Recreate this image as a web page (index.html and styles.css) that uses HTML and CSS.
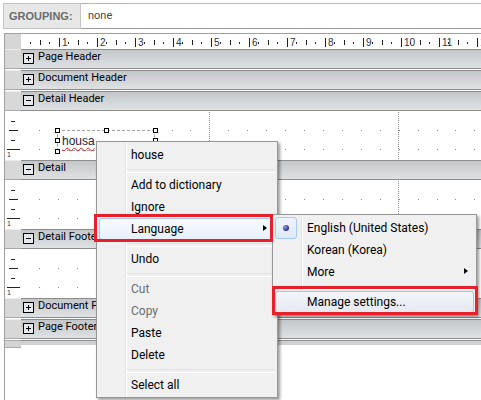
FILE: index.html
```html
<!DOCTYPE html>
<html>
<head>
<meta charset="utf-8">
<link rel="stylesheet" href="styles.css">
</head>
<body>
<div class="toolbar">
  <div class="tb-label">GROUPING:</div>
  <div class="tb-field">none</div>
</div>

<div class="designer">
  <div class="ruler-row">
    <div class="side side-gray"></div>
    <svg class="hruler" width="460" height="15" shape-rendering="crispEdges">
      <defs>
        <pattern id="ticks" width="38" height="15" patternUnits="userSpaceOnUse">
          <line x1="0.5" y1="4" x2="0.5" y2="13" stroke="#222"/>
          <line x1="9.5" y1="8" x2="9.5" y2="10" stroke="#222"/>
          <line x1="19.5" y1="6" x2="19.5" y2="11" stroke="#222"/>
          <line x1="28.5" y1="8" x2="28.5" y2="10" stroke="#222"/>
        </pattern>
      </defs>
      <rect x="1" y="0" width="459" height="15" fill="url(#ticks)"/>
      <g class="rnum">
        <text x="41" y="12">1</text><text x="79" y="12">2</text><text x="117" y="12">3</text>
        <text x="155" y="12">4</text><text x="193" y="12">5</text><text x="231" y="12">6</text>
        <text x="269" y="12">7</text><text x="307" y="12">8</text><text x="345" y="12">9</text>
        <text x="383" y="12">10</text><text x="421" y="12">11</text><text x="459" y="12">12</text>
      </g>
    </svg>
  </div>

  <div class="band"><div class="side side-band"></div><div class="band-bar"><span class="toggle plus"></span>Page Header</div></div>
  <div class="band"><div class="side side-band"></div><div class="band-bar"><span class="toggle plus"></span>Document Header</div></div>
  <div class="band"><div class="side side-band"></div><div class="band-bar"><span class="toggle"></span>Detail Header</div></div>
  <div class="body-row">
    <svg class="vruler" width="16" height="49" shape-rendering="crispEdges">
      <line x1="6" y1="10.5" x2="10" y2="10.5" stroke="#222"/>
      <line x1="4" y1="19.5" x2="13" y2="19.5" stroke="#222"/>
      <line x1="6" y1="29.5" x2="10" y2="29.5" stroke="#222"/>
      <line x1="2" y1="38.5" x2="15" y2="38.5" stroke="#222"/>
      <text x="2" y="46" class="vnum">1</text>
    </svg>
    <div class="canvas">
      <svg class="grid" width="460" height="49" shape-rendering="crispEdges">
        <line x1="18" y1="19.5" x2="460" y2="19.5" stroke="#8c8c8c" stroke-dasharray="1 17.93"/>
        <line x1="18" y1="38.5" x2="460" y2="38.5" stroke="#8c8c8c" stroke-dasharray="1 17.93"/>
        <line x1="188.5" y1="1" x2="188.5" y2="49" stroke="#8a8a8a" stroke-dasharray="1 1"/>
        <line x1="377.5" y1="1" x2="377.5" y2="49" stroke="#8a8a8a" stroke-dasharray="1 1"/>
      </svg>
      <div class="textbox">
        <span class="tb-text">housa</span>
        <i class="h h1"></i><i class="h h2"></i><i class="h h3"></i>
        <i class="h h4"></i><i class="h h5"></i>
        <i class="h h6"></i><i class="h h7"></i><i class="h h8"></i>
      </div>
    </div>
  </div>

  <div class="band"><div class="side side-band"></div><div class="band-bar"><span class="toggle"></span>Detail</div></div>
  <div class="body-row">
    <svg class="vruler" width="16" height="49" shape-rendering="crispEdges">
      <line x1="6" y1="10.5" x2="10" y2="10.5" stroke="#222"/>
      <line x1="4" y1="19.5" x2="13" y2="19.5" stroke="#222"/>
      <line x1="6" y1="29.5" x2="10" y2="29.5" stroke="#222"/>
      <line x1="2" y1="38.5" x2="15" y2="38.5" stroke="#222"/>
      <text x="2" y="46" class="vnum">1</text>
    </svg>
    <div class="canvas">
      <svg class="grid" width="460" height="49" shape-rendering="crispEdges">
        <line x1="18" y1="19.5" x2="460" y2="19.5" stroke="#8c8c8c" stroke-dasharray="1 17.93"/>
        <line x1="18" y1="38.5" x2="460" y2="38.5" stroke="#8c8c8c" stroke-dasharray="1 17.93"/>
        <line x1="188.5" y1="1" x2="188.5" y2="49" stroke="#8a8a8a" stroke-dasharray="1 1"/>
        <line x1="377.5" y1="1" x2="377.5" y2="49" stroke="#8a8a8a" stroke-dasharray="1 1"/>
      </svg>
    </div>
  </div>

  <div class="band"><div class="side side-band"></div><div class="band-bar"><span class="toggle"></span>Detail Footer</div></div>
  <div class="body-row">
    <svg class="vruler" width="16" height="49" shape-rendering="crispEdges">
      <line x1="6" y1="10.5" x2="10" y2="10.5" stroke="#222"/>
      <line x1="4" y1="19.5" x2="13" y2="19.5" stroke="#222"/>
      <line x1="6" y1="29.5" x2="10" y2="29.5" stroke="#222"/>
      <line x1="2" y1="38.5" x2="15" y2="38.5" stroke="#222"/>
      <text x="2" y="46" class="vnum">1</text>
    </svg>
    <div class="canvas">
      <svg class="grid" width="460" height="49" shape-rendering="crispEdges">
        <line x1="18" y1="19.5" x2="460" y2="19.5" stroke="#8c8c8c" stroke-dasharray="1 17.93"/>
        <line x1="18" y1="38.5" x2="460" y2="38.5" stroke="#8c8c8c" stroke-dasharray="1 17.93"/>
        <line x1="188.5" y1="1" x2="188.5" y2="49" stroke="#8a8a8a" stroke-dasharray="1 1"/>
        <line x1="377.5" y1="1" x2="377.5" y2="49" stroke="#8a8a8a" stroke-dasharray="1 1"/>
      </svg>
    </div>
  </div>

  <div class="band"><div class="side side-band"></div><div class="band-bar"><span class="toggle plus"></span>Document Footer</div></div>
  <div class="band"><div class="side side-band"></div><div class="band-bar"><span class="toggle plus"></span>Page Footer</div></div>
  <div class="strip"><div class="side side-strip"></div><div class="strip-bar"></div></div>
</div>

<div class="menu main-menu">
  <div class="mi">house</div>
  <div class="sep"></div>
  <div class="mi">Add to dictionary</div>
  <div class="mi">Ignore</div>
  <div class="mi hot">Language<span class="arrow"></span></div>
  <div class="sep"></div>
  <div class="mi">Undo</div>
  <div class="sep"></div>
  <div class="mi disabled">Cut</div>
  <div class="mi disabled">Copy</div>
  <div class="mi">Paste</div>
  <div class="mi">Delete</div>
  <div class="sep"></div>
  <div class="mi">Select all</div>
</div>

<div class="menu sub-menu">
  <div class="mi"><span class="check"></span>English (United States)</div>
  <div class="mi">Korean (Korea)</div>
  <div class="mi">More<span class="arrow arrow-sub"></span></div>
  <div class="sep"></div>
  <div class="mi hot soft">Manage settings...</div>
</div>

<div class="callout callout-lang"></div>
<div class="callout callout-manage"></div>
</body>
</html>
```

FILE: styles.css
```css
* { box-sizing: border-box; margin: 0; padding: 0; }

body {
  width: 481px;
  height: 400px;
  overflow: hidden;
  background: #fff;
  font-family: Roboto, "Liberation Sans", sans-serif;
  position: relative;
}

/* top grouping bar */
.toolbar {
  display: flex;
  height: 26px;
  margin: 3px 0 0 3px;
}
.tb-label {
  width: 78px;
  background: #e7e7e7;
  border: 1px solid #c4c4c4;
  padding-left: 5px;
  font: bold 11px/24px "Liberation Sans", sans-serif;
  color: #6c6c6c;
}
.tb-field {
  flex: 1;
  border-top: 1px solid #b6b6b6;
  border-bottom: 1px solid #9c9c9c;
  padding-left: 7px;
  font: 11px/24px Roboto, sans-serif;
  color: #4a4a4a;
}

/* designer surface */
.designer {
  margin: 4px 0 0 4px;
  border-left: 1px solid #a0a0a0;
  border-top: 1px solid #a0a0a0;
  height: 367px;
  background: #fff;
}
.side { width: 16px; flex: none; }
.side-gray { background: #d6d6d6; }

.ruler-row { display: flex; height: 15px; }
.hruler { display: block; background: #fff; }
.rnum text { font: 10px "Liberation Sans", sans-serif; fill: #2b3145; }

.band { display: flex; height: 20px; }
.band + .band { margin-top: 1px; }
.side-band {
  background: #d8d8d8;
  border-top: 1px solid #ececec;
  border-bottom: 1px solid #a9a9a9;
}
.band-bar {
  flex: 1;
  display: flex;
  align-items: flex-start;
  padding-left: 2px;
  border-top: 1px solid #8c8c8c;
  border-bottom: 1px solid #8c8c8c;
  background: linear-gradient(#c4c7ca, #dfe1e3);
  font-size: 11px;
  line-height: 14px;
  color: #000;
}
.toggle {
  width: 11px;
  height: 11px;
  margin: 3px 4px 0 0;
  border: 1px solid #000;
  background: rgba(255, 255, 255, 0.45);
  position: relative;
  flex: none;
}
.toggle::before {
  content: "";
  position: absolute;
  left: 2px; top: 4px;
  width: 5px; height: 1px;
  background: #000;
}
.toggle.plus::after {
  content: "";
  position: absolute;
  left: 4px; top: 2px;
  width: 1px; height: 5px;
  background: #000;
}

.body-row { display: flex; height: 49px; }
.vruler { display: block; flex: none; background: #fff; }
.vnum { font: 7px "Liberation Sans", sans-serif; fill: #2b3145; }
.canvas { flex: 1; position: relative; }
.grid { display: block; }

.textbox {
  position: absolute;
  left: 36px;
  top: 19px;
  width: 98px;
  height: 21px;
  border: 1px dashed #a0a0a0;
  background: #fff;
}
.tb-text {
  position: absolute;
  left: 4px;
  top: 3px;
  font: 12px/14px "Liberation Sans", sans-serif;
  color: #1c1c38;
  text-decoration: underline wavy #e02020;
  text-decoration-thickness: 1px;
  text-underline-offset: 2px;
}
.h {
  position: absolute;
  width: 5px;
  height: 5px;
  border: 1px solid #000;
  background: #fff;
}
.h1 { left: -3px; top: -3px; }
.h2 { left: 46px; top: -3px; }
.h3 { left: 95px; top: -3px; }
.h4 { left: -3px; top: 7px; }
.h5 { left: 95px; top: 7px; }
.h6 { left: -3px; top: 18px; }
.h7 { left: 46px; top: 18px; }
.h8 { left: 95px; top: 18px; }

.strip { display: flex; height: 8px; margin-top: 1px; }
.side-strip { background: #d4d4d4; border-top: 1px solid #a8a8a8; border-bottom: 1px solid #a8a8a8; }
.strip-bar {
  flex: 1;
  height: 5px;
  border-top: 1px solid #8c8c8c;
  background: #d0d0d0;
}

/* context menus */
.menu {
  position: absolute;
  border: 1px solid #979797;
  padding: 2px 2px 1px;
  background-color: #f0f0f0;
  background-image: linear-gradient(to right, transparent 28px, #e2e3e3 28px, #e2e3e3 29px, #fff 29px, #fff 30px, transparent 30px);
  box-shadow: 2px 2px 3px rgba(0, 0, 0, 0.4);
  font: 12px Roboto, sans-serif;
  color: #000;
}
.main-menu { left: 96px; top: 141px; width: 182px; }
.sub-menu { left: 272px; top: 214px; width: 205px; }

.mi {
  position: relative;
  height: 22px;
  line-height: 22px;
  padding-left: 32px;
  white-space: nowrap;
}
.mi.disabled { color: #6d6d6d; }
.mi.hot {
  border-radius: 3px;
  background: linear-gradient(#f8fbfe, #e6eff9);
  box-shadow: inset 0 0 0 1px #a9c8ee;
}
.mi.hot.soft {
  background: linear-gradient(#f3f5f8, #e4e9f0);
  box-shadow: inset 0 0 0 1px #b4c2d6;
}
.sep { position: relative; height: 8px; margin-left: 28px; }
.sep::after {
  content: "";
  position: absolute;
  left: 0; right: 0; top: 3px;
  height: 2px;
  border-top: 1px solid #e0e0e0;
  border-bottom: 1px solid #fff;
}
.arrow {
  position: absolute;
  right: 8px;
  top: 7px;
  width: 0; height: 0;
  border-left: 4px solid #000;
  border-top: 3.5px solid transparent;
  border-bottom: 3.5px solid transparent;
}
.arrow-sub { right: 6px; }

.check {
  position: absolute;
  left: 0; top: 0;
  width: 22px; height: 22px;
  border: 1px solid #a9c8ee;
  border-radius: 3px;
  background: linear-gradient(#eef4fc, #dfe9f7);
}
.check::after {
  content: "";
  position: absolute;
  left: 7px; top: 7px;
  width: 6px; height: 6px;
  border-radius: 50%;
  background: radial-gradient(circle at 35% 35%, #9a9ae6, #2a2a8c 70%);
}

/* red annotation frames */
.callout {
  position: absolute;
  border: 3px solid #e8202a;
}
.callout-lang { left: 94px; top: 214px; width: 179px; height: 28px; }
.callout-manage { left: 272px; top: 286px; width: 206px; height: 29px; }
```
